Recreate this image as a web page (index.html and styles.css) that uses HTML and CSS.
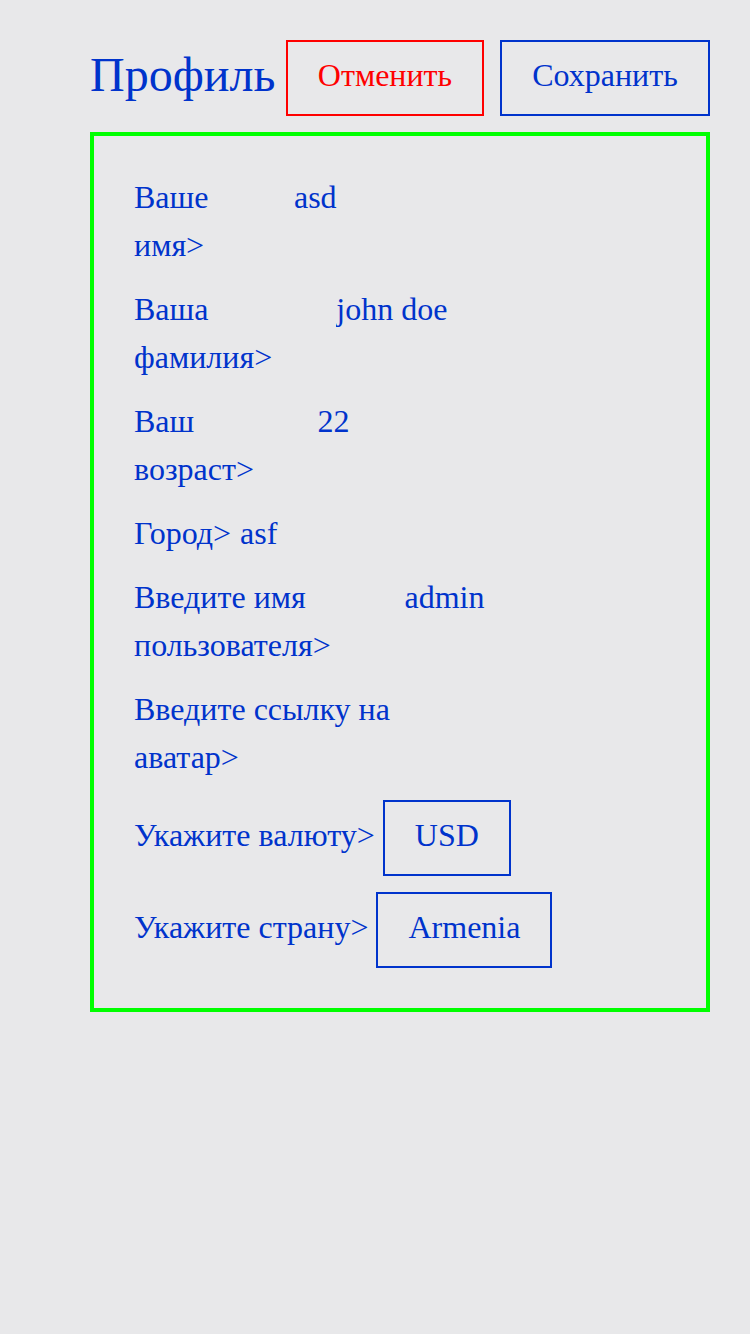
FILE: index.html
```html
<!DOCTYPE html>
<html lang="ru">
<head>
<meta charset="utf-8">
<title>Профиль</title>
<link rel="stylesheet" href="styles.css">
</head>
<body>
<div class="page">
  <header class="header">
    <h1 class="title">Профиль</h1>
    <div class="actions">
      <button class="btn btn-cancel">Отменить</button>
      <button class="btn btn-save">Сохранить</button>
    </div>
  </header>
  <form class="card">
    <label class="row">
      <span class="label">Ваше имя&gt;</span>
      <input class="field" value="asd">
    </label>
    <label class="row">
      <span class="label">Ваша фамилия&gt;</span>
      <input class="field" value="john doe">
    </label>
    <label class="row">
      <span class="label">Ваш возраст&gt;</span>
      <input class="field" value="22">
    </label>
    <label class="row">
      <span class="label">Город&gt;</span>
      <input class="field" value="asf">
    </label>
    <label class="row">
      <span class="label">Введите имя пользователя&gt;</span>
      <input class="field" value="admin">
    </label>
    <label class="row">
      <span class="label">Введите ссылку на аватар&gt;</span>
      <input class="field" value="">
    </label>
    <label class="row row-select">
      <span class="label">Укажите валюту&gt;</span>
      <span class="select">USD</span>
    </label>
    <label class="row row-select">
      <span class="label">Укажите страну&gt;</span>
      <span class="select">Armenia</span>
    </label>
  </form>
</div>
</body>
</html>
```
FILE: styles.css
```css
html, body {
  margin: 0;
  padding: 0;
  background: #e8e8ea;
}
body {
  font-family: "Liberation Serif", "Times New Roman", serif;
  color: #0033cc;
}
.page {
  padding: 40px 40px 0 90px;
}
.header {
  display: flex;
  align-items: center;
  height: 76px;
}
.title {
  margin: 0 11px 6px 0;
  font-size: 48px;
  font-weight: normal;
  line-height: 56px;
  color: #0033cc;
}
.actions {
  display: flex;
  gap: 16px;
}
.btn {
  font-family: inherit;
  font-size: 32px;
  line-height: 48px;
  padding: 9px 30.5px 15px;
  background: transparent;
  border: 2px solid #0033cc;
  color: #0033cc;
  margin: 0;
}
.btn-cancel {
  padding-left: 29.5px;
  padding-right: 29.5px;
  border-color: #ff0000;
  color: #ff0000;
}
.card {
  margin-top: 16px;
  border: 4px solid #00ff00;
  padding: 40px;
  display: flex;
  flex-direction: column;
  gap: 16px;
}
.row {
  display: flex;
  align-items: flex-start;
  font-size: 32px;
  line-height: 48px;
  margin: -3px 0 3px;
}
.label {
  flex: 0 1 auto;
  margin-right: 8px;
}
.field {
  flex: 0 1 375px;
  min-width: 0;
  font-family: inherit;
  font-size: 32px;
  line-height: 48px;
  height: 48px;
  padding: 0 1px;
  border: none;
  background: transparent;
  color: #0033cc;
  outline: none;
}
.row-select {
  align-items: center;
  margin: 0;
}
.row-select .label {
  position: relative;
  top: -3px;
}
.select {
  border: 2px solid #0033cc;
  padding: 9px 30px 15px;
  line-height: 48px;
}
```
